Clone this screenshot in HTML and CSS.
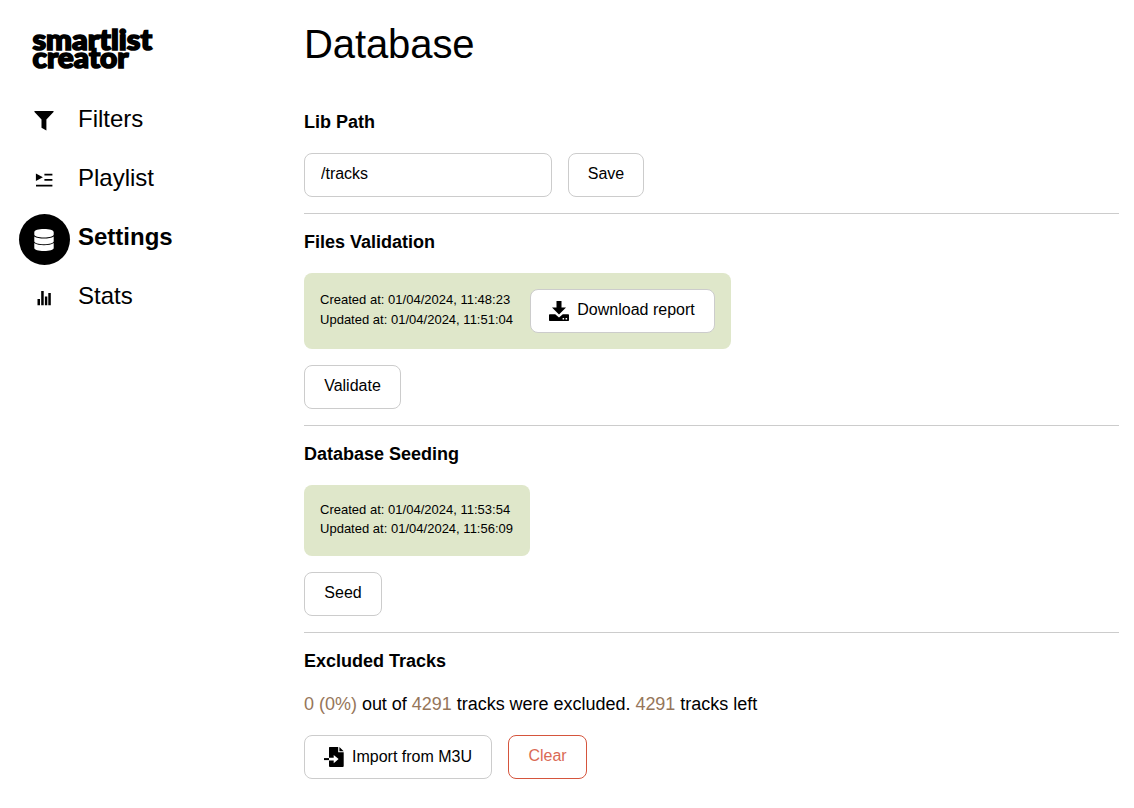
FILE: index.html
```html
<!DOCTYPE html>
<html lang="en">
<head>
<meta charset="utf-8">
<title>Smartlist Creator</title>
<link rel="stylesheet" href="styles.css">
</head>
<body>
<div class="layout">
  <aside class="sidebar">
    <svg class="logo" width="124" height="46" viewBox="0 0 124 46" role="img" aria-label="smartlist creator">
      <text x="1.5" y="24" textLength="119.5" lengthAdjust="spacingAndGlyphs">smartlist</text>
      <text x="1.5" y="41.5" textLength="96" lengthAdjust="spacingAndGlyphs">creator</text>
    </svg>
    <nav class="menu">
      <a class="item"><span class="icon"><svg width="20" height="20" viewBox="0 0 20 20"><path d="M.7 0H19.3Q20 .4 19.5 1.1L12.4 8.6V19.5L7.5 16.8V8.6L.5 1.1Q0 .4 .7 0Z"/></svg></span><span class="label">Filters</span></a>
      <a class="item"><span class="icon"><svg width="20" height="20" viewBox="0 0 20 20"><path d="M1.9 3.5L8.9 7.3 1.9 11.1ZM10.4 3.8H18.4V5.6H10.4ZM10.4 9H18.4V10.8H10.4ZM2 14.8H18.4V16.6H2Z"/></svg></span><span class="label">Playlist</span></a>
      <a class="item active"><span class="icon"><svg width="20" height="22" viewBox="0 0 20 22"><path d="M.3 3.2C.3 1.2 4.5 0 10 0S19.7 1.2 19.7 3.2V5.5C19.7 7.3 15.4 8.5 10 8.5S.3 7.3 .3 5.5ZM.3 7.4C2.4 8.9 6 9.5 10 9.5S17.6 8.9 19.7 7.4V12.2C19.7 14 15.4 15.3 10 15.3S.3 14 .3 12.2ZM.3 14.1C2.4 15.6 6 16.3 10 16.3S17.6 15.6 19.7 14.1V19C19.7 20.8 15.4 22 10 22S.3 20.8 .3 19Z"/></svg></span><span class="label">Settings</span></a>
      <a class="item"><span class="icon"><svg width="20" height="20" viewBox="0 0 20 20"><path d="M3.5 11H6V17.3H3.5ZM7.2 3H9.7V17.3H7.2ZM10.9 8.5H13.3V17.3H10.9ZM14.3 5H16.8V17.3H14.3Z"/></svg></span><span class="label">Stats</span></a>
    </nav>
  </aside>
  <main class="content">
    <h1 class="title">Database</h1>
    <section class="section">
      <h2 class="heading">Lib Path</h2>
      <div class="row"><input class="field" type="text" value="/tracks"><button class="btn save">Save</button></div>
    </section>
    <section class="section">
      <h2 class="heading">Files Validation</h2>
      <div class="report">
        <div class="dates wide"><div><span class="created">Created at: 01/04/2024, 11:48:23</span></div><div><span class="updated">Updated at: 01/04/2024, 11:51:04</span></div></div>
        <button class="btn download"><svg width="20" height="20" viewBox="0 0 20 20"><path d="M7.5 0H12.5V6.5H17L10 13.5 3 6.5H7.5ZM.8 13.3H6.2L10 16.5 13.8 13.3H19.2Q20 13.3 20 14.1V19.2Q20 20 19.2 20H.8Q0 20 0 19.2V14.1Q0 13.3 .8 13.3ZM13.6 17.1V18.4H15.1V17.1ZM16.6 17.1V18.4H18.1V17.1Z" fill-rule="evenodd"/></svg><span>Download report</span></button>
      </div>
      <button class="btn validate">Validate</button>
    </section>
    <section class="section">
      <h2 class="heading">Database Seeding</h2>
      <div class="report seeding">
        <div class="dates"><div><span class="created">Created at: 01/04/2024, 11:53:54</span></div><div><span class="updated">Updated at: 01/04/2024, 11:56:09</span></div></div>
      </div>
      <button class="btn seed">Seed</button>
    </section>
    <section class="section last">
      <h2 class="heading">Excluded Tracks</h2>
      <p class="summary"><span class="num">0 (0%)</span> out of <span class="num">4291</span> tracks were excluded. <span class="num">4291</span> tracks left</p>
      <div class="row">
        <button class="btn import"><svg width="20" height="20" viewBox="0 0 20 20"><path d="M5.6 0H14.2V5.3H19.7V19Q19.7 20 18.7 20H6Q5 20 5 19V.8Q5 0 5.6 0ZM15.4 0L19.7 4.3H15.4Z"/><path class="arrow-head" d="M5 10.8H9.7V8L14.6 12.1 9.7 16.2V13.4H5Z"/><path d="M0 11.1H5V13.1H0Z"/></svg><span>Import from M3U</span></button>
        <button class="btn danger">Clear</button>
      </div>
    </section>
  </main>
</div>
</body>
</html>
```
FILE: styles.css
```css
* { box-sizing: border-box; }
body {
  margin: 0;
  background: #fff;
  color: #000;
  font: 18px/27px "Liberation Sans", Arial, sans-serif;
}
svg { display: block; fill: currentColor; flex: none; }
.layout { display: grid; grid-template-columns: 304px 815px; height: 808px; overflow: hidden; }
.sidebar { padding: 26px 0 0 19px; }
.logo { margin-left: 12px; overflow: visible; font: 900 27.5px "Lato", sans-serif; stroke: #000; stroke-width: 1.6; }
.menu { display: flex; flex-direction: column; gap: 8px; margin-top: 24px; }
.item { display: flex; align-items: center; gap: 8px; height: 51px; font-size: 24px; line-height: 36px; }
.icon { display: flex; align-items: center; justify-content: center; width: 51px; height: 51px; padding: 0 1px 1px 0; border-radius: 50%; }
.label { padding-bottom: 5px; }
.active { font-weight: 700; }
.active .icon { padding-bottom: 0; background: #000; color: #fff; }
.title { margin: 0; height: 94px; padding-top: 16px; font-size: 40px; line-height: 56px; font-weight: 400; letter-spacing: -0.1px; }
.section { border-bottom: 1px solid #ccc; padding: 16px 0; }
.title + .section { padding-top: 0; margin-top: 16px; }
.last { border-bottom: 0; }
.heading { margin: 0 0 16px; padding-bottom: 3px; font-size: 18px; line-height: 24px; font-weight: 700; }
.row { display: flex; gap: 16px; }
.field, .btn {
  height: 44px;
  border: 1px solid #ccc;
  border-radius: 8px;
  background: #fff;
  color: #000;
  font: 16px/24px "Liberation Sans", Arial, sans-serif;
}
.field { width: 248px; padding: 0 16px 3px; }
.btn { display: flex; align-items: center; justify-content: center; gap: 8px; padding: 0 0 3px; white-space: nowrap; }
.btn svg { margin-top: 3px; }
.save { width: 76px; }
.download { width: 185px; padding-right: 1px; }
.validate { width: 97px; }
.seed { width: 78px; }
.import { width: 188px; padding-bottom: 1px; }
.import svg { margin-top: 0; }
.danger { width: 79px; color: #da6a55; border-color: #d5553d; }
.report { display: flex; width: 427px; height: 76px; margin-bottom: 16px; padding: 16px; gap: 16px; border-radius: 8px; background: #dfe7ca; }
.dates { width: 194px; padding-top: 0; margin-top: -1px; font-size: 13px; line-height: 19px; letter-spacing: 0.01px; white-space: nowrap; }
.wide { margin-top: 1px; line-height: 20px; }
.seeding { width: 226px; height: 71px; }
.summary { margin: 0 0 16px; padding-bottom: 3px; line-height: 24px; letter-spacing: -0.02px; }
.num { color: #96765a; }
.arrow-head { fill: #fff; }
```
